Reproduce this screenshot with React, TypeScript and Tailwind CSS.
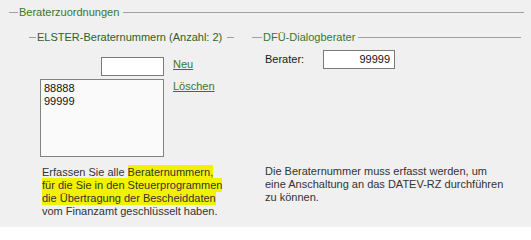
export default function App() {
  return (
    <div className="w-[531px] h-[227px] bg-[#f0f0f0] text-[11px] leading-[13px] text-[#333] font-['Liberation_Sans',Arial,sans-serif] overflow-hidden">
      {/* outer group */}
      <div className="pl-[9px] pr-[7px] pt-[6px] flex items-center">
        <div className="w-[9px] h-px bg-[#a0a0a0]" />
        <span className="px-[1px] text-[#37782a]">Beraterzuordnungen</span>
        <div className="flex-1 h-px bg-[#a0a0a0] ml-[3px]" />
      </div>

      <div className="flex pt-[12px]">
        {/* left column */}
        <div className="w-[223px] ml-[29px] shrink-0">
          <div className="flex items-center">
            <div className="w-[7px] h-px bg-[#a0a0a0]" />
            <span className="px-[1px] text-[#2f5f24]">ELSTER-Beraternummern (Anzahl: 2)</span>
            <div className="w-[7px] h-px bg-[#a0a0a0] ml-[4px]" />
          </div>

          <div className="grid grid-cols-[135px_auto] gap-x-[9px] mt-[13px]">
            <input
              type="text"
              className="justify-self-end w-[63px] h-[19px] bg-white border border-[#7a7a7a] outline-none"
            />
            <a href="#" className="self-start mt-[1px] text-[#37782a] underline">
              Neu
            </a>
            <div className="ml-[11px] mt-[3px] w-[124px] h-[78px] bg-[#fafafa] border border-[#828282] pl-[3px] pt-[2px] text-[#111]">
              <div>88888</div>
              <div>99999</div>
            </div>
            <a href="#" className="self-start mt-[4px] text-[#37782a] underline">
              Löschen
            </a>
          </div>

          <p className="ml-[13px] mt-[9px]">
            Erfassen Sie alle <span className="bg-[#f2f200] py-[1px]">Beraternummern,</span>
            <br />
            <span className="bg-[#f2f200] py-[1px]">für die Sie in den Steuerprogrammen</span>
            <br />
            <span className="bg-[#f2f200] py-[1px]">die Übertragung der Bescheiddaten</span>
            <br />
            vom Finanzamt geschlüsselt haben.
          </p>
        </div>

        {/* right column */}
        <div className="flex-1 mr-[10px]">
          <div className="flex items-center">
            <div className="w-[10px] h-px bg-[#a0a0a0]" />
            <span className="px-[1px] text-[#37782a]">DFÜ-Dialogberater</span>
            <div className="flex-1 h-px bg-[#a0a0a0] ml-[2px]" />
          </div>

          <div className="flex items-center mt-[6px] ml-[13px]">
            <span className="w-[58px] text-[#1a1a1a]">Berater:</span>
            <div className="w-[72px] h-[19px] bg-white border border-[#7a7a7a] text-right pr-[4px] leading-[17px] text-[#111]">
              99999
            </div>
          </div>

          <p className="ml-[13px] mt-[96px]">
            Die Beraternummer muss erfasst werden, um
            <br />
            eine Anschaltung an das DATEV-RZ durchführen
            <br />
            zu können.
          </p>
        </div>
      </div>
    </div>
  );
}
